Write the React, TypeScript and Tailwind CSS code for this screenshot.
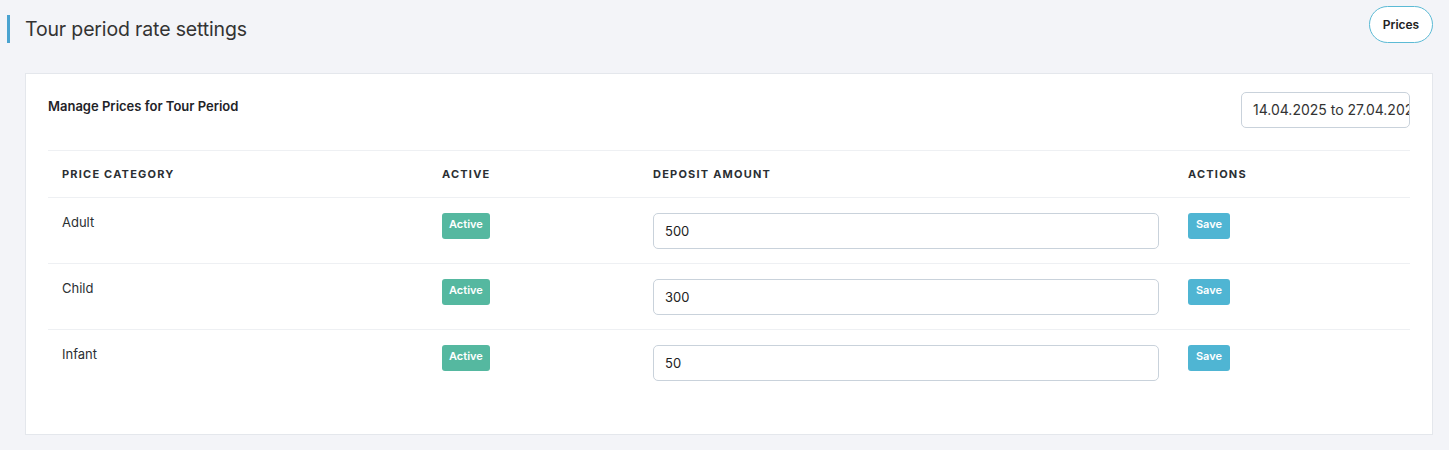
const rows = [
  { name: "Adult", amount: "500" },
  { name: "Child", amount: "300" },
  { name: "Infant", amount: "50" },
];

const App = () => {
  return (
    <div className="min-h-[450px] bg-[#f3f4f8] font-['Inter',sans-serif] text-[#2b2f33]">
      <div className="flex items-start justify-between pl-[7px] pr-[16px] pt-[6px]">
        <div className="mt-[9px] flex items-center">
          <div className="w-[3px] h-[28px] bg-[#4aa3d0]" />
          <h1 className="ml-[15px] text-[19.5px] font-normal leading-[28px] text-[#333] tracking-[-0.15px]">
            Tour period rate settings
          </h1>
        </div>
        <button className="h-[37px] w-[64px] rounded-full border-[1.5px] border-[#5bbad5] bg-white text-[12px] font-semibold text-[#222]">
          Prices
        </button>
      </div>

      <div className="ml-[25px] mr-[16px] mt-[30px] mb-[15px] border border-[#e4e7ec] bg-white px-[22px] pt-[18px] pb-[38px]">
        <div className="flex items-start justify-between">
          <div className="pt-[5px] text-[13px] font-semibold text-[#1f2328]">
            Manage Prices for Tour Period
          </div>
          <div className="h-[36px] w-[169px] overflow-hidden whitespace-nowrap rounded-[5px] border border-[#c9d2db] px-[11px] text-[14px] leading-[34px] text-[#333]">
            14.04.2025 to 27.04.2025
          </div>
        </div>

        <div className="mt-[22px] border-t border-[#eef0f3]">
          <div className="grid grid-cols-[380px_211px_535px_1fr] border-b border-[#eef0f3] h-[47px] items-center text-[11px] font-bold tracking-[0.11em] text-[#2b2f33]">
            <div className="pl-[14px]">PRICE CATEGORY</div>
            <div className="pl-[14px]">ACTIVE</div>
            <div className="pl-[14px]">DEPOSIT AMOUNT</div>
            <div className="pl-[14px]">ACTIONS</div>
          </div>
          {rows.map((r, i) => (
            <div
              key={r.name}
              className={
                "grid grid-cols-[380px_211px_535px_1fr] h-[66px] pt-[15px] " +
                (i < rows.length - 1 ? "border-b border-[#eef0f3]" : "")
              }
            >
              <div className="pl-[14px] text-[13px] text-[#2b2f33]">{r.name}</div>
              <div className="flex items-start pl-[14px]">
                <span className="flex h-[26px] items-center rounded-[3px] bg-[#55b8a0] px-[7px] pb-[3px] text-[11px] font-semibold text-white">
                  Active
                </span>
              </div>
              <div className="pl-[14px] pr-[6px]">
                <div className="h-[36px] w-[506px] rounded-[5px] border border-[#c9d2db] pl-[11px] text-[13px] leading-[34px] text-[#222]">
                  {r.amount}
                </div>
              </div>
              <div className="flex items-start pl-[14px]">
                <button className="h-[26px] w-[42px] rounded-[3px] bg-[#4fb5d3] pb-[3px] text-[11px] font-semibold text-white">
                  Save
                </button>
              </div>
            </div>
          ))}
        </div>
      </div>
    </div>
  );
};

export default App;
